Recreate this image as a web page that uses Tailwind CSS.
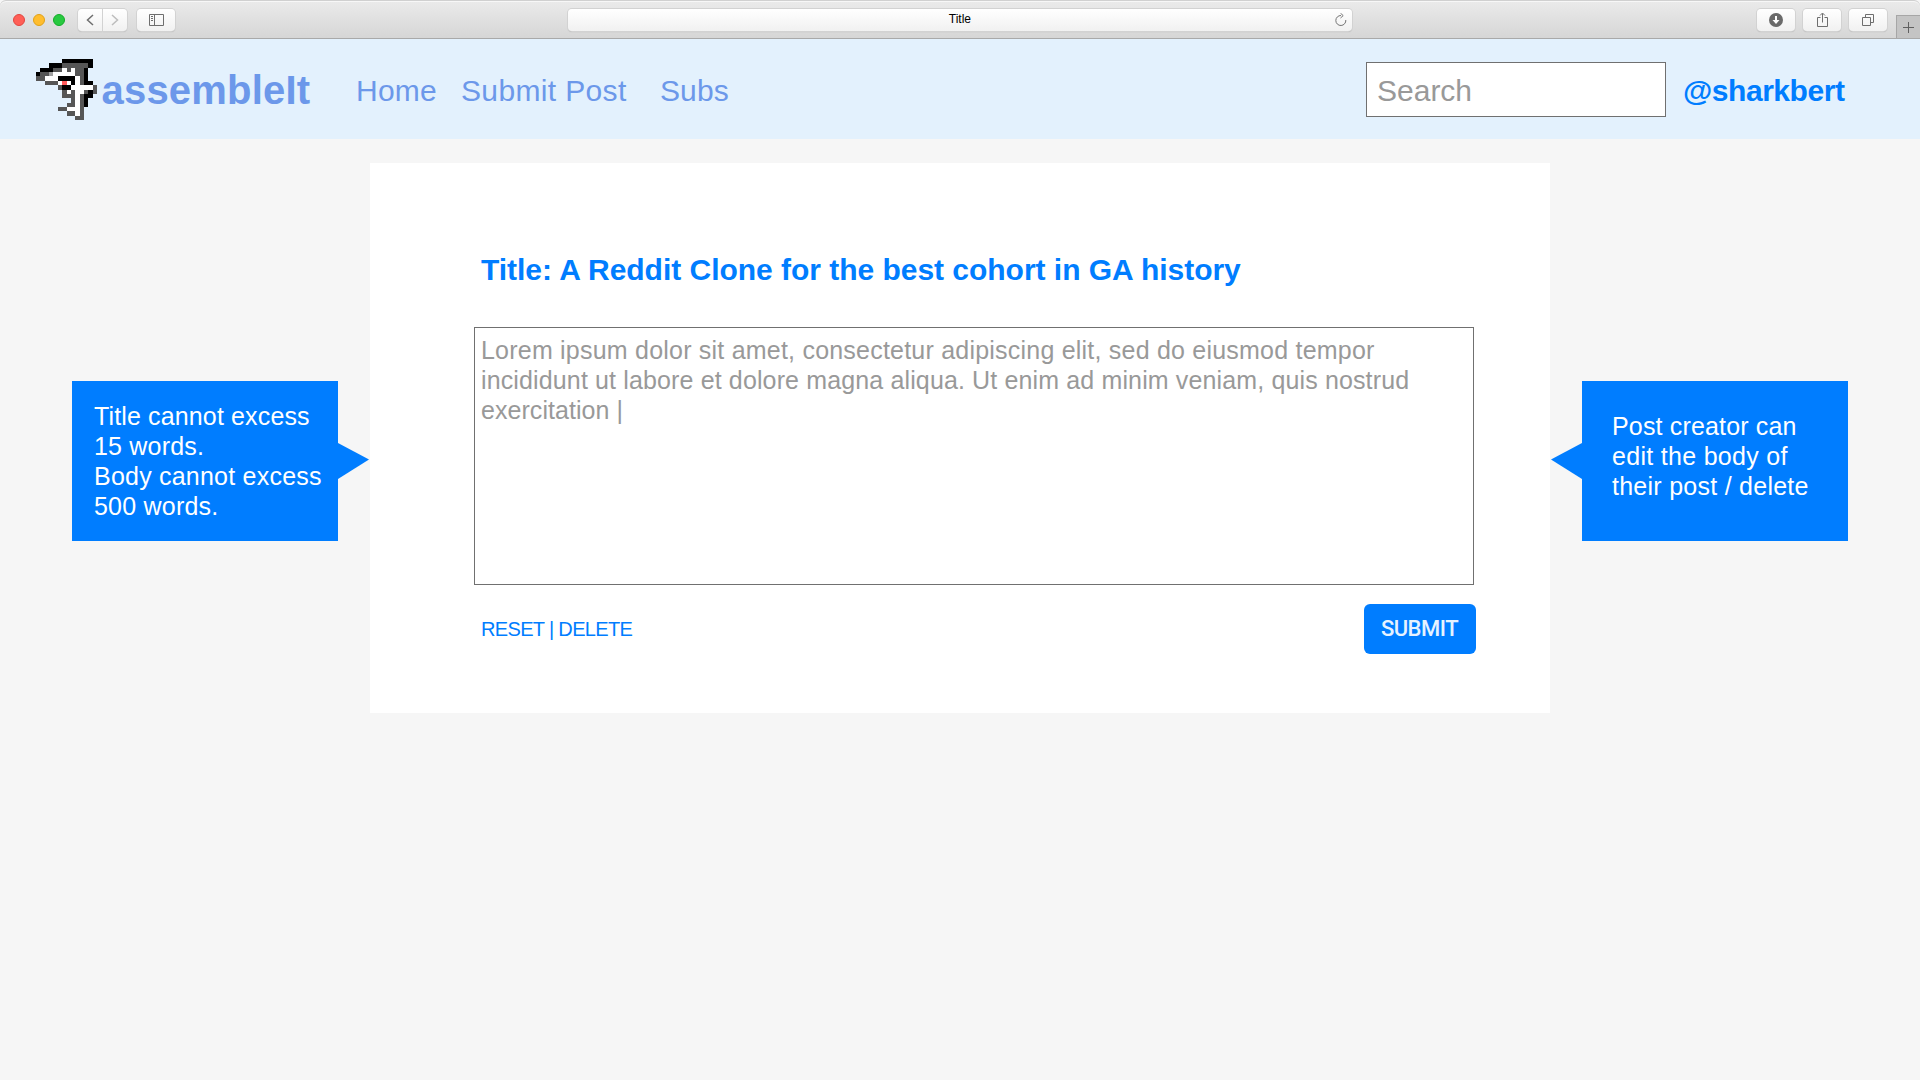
<!DOCTYPE html>
<html lang="en">
<head>
<meta charset="utf-8">
<title>Title</title>
<script src="https://cdn.jsdelivr.net/npm/@tailwindcss/browser@4"></script>
</head>
<body class="h-[1080px] w-[1920px] overflow-hidden bg-[#f6f6f6] font-['Liberation_Sans',Arial,sans-serif] whitespace-nowrap">
<div class="flex h-[39px] items-start rounded-t-md border-b border-[#a9a9a9] bg-linear-to-b from-[#ebebeb] to-[#d6d6d6] shadow-[inset_0_1px_0_#d0d0d0,inset_0_2px_0_#f7f7f7] pt-[9px]">
  <div class="flex w-[78px] gap-2 pl-[13px] pt-[5px]">
    <i class="size-3 rounded-full border border-[#e2463f] bg-[#ff5f57]"></i>
    <i class="size-3 rounded-full border border-[#e1a116] bg-[#ffbd2e]"></i>
    <i class="size-3 rounded-full border border-[#12ac28] bg-[#28c940]"></i>
  </div>
  <div class="flex gap-px">
    <div class="flex h-[22px] w-6 items-center justify-center rounded-l bg-linear-to-b from-white to-[#f1f1f1] shadow-[0_0_0_1px_#d2d2d2,0_1px_1px_#aaa]"><svg class="h-3 w-2" viewBox="0 0 8 12" fill="none" stroke="#6e6e6e" stroke-width="1.5"><path d="M7 1 1.500 6 7 11"/></svg></div>
    <div class="flex h-[22px] w-6 items-center justify-center rounded-r bg-linear-to-b from-white to-[#f1f1f1] shadow-[0_0_0_1px_#d2d2d2,0_1px_1px_#aaa]"><svg class="h-3 w-2" viewBox="0 0 8 12" fill="none" stroke="#bdbdbd" stroke-width="1.5"><path d="M1 1 6.500 6 1 11"/></svg></div>
  </div>
  <div class="ml-[10px] flex h-[22px] w-[38px] items-center justify-center rounded bg-linear-to-b from-white to-[#f1f1f1] shadow-[0_0_0_1px_#d2d2d2,0_1px_1px_#aaa]"><svg class="ml-px h-3 w-[15px]" viewBox="0 0 15 12" fill="none" stroke="#6e6e6e"><path d="M.5.5h14v11H.5zM5.500.5v11M2 2.500h2M2 4.500h2M2 6.500h2"/></svg></div>
  <div class="ml-[393px] flex h-[22px] w-[785px] items-center rounded bg-linear-to-b from-white to-[#f1f1f1] pl-[381px] shadow-[0_0_0_1px_#d2d2d2,0_1px_1px_#aaa]"><span class="w-[386px] pb-0.5 text-xs text-black">Title</span><svg class="h-[14px] w-3" viewBox="0 0 12 14" fill="none" stroke="#737373"><path d="M6 2.500A5 5 0 1 0 10.800 7M5.500.2 8.200 2.600 5.500 5"/></svg></div>
  <div class="ml-[405px] flex gap-2">
    <div class="flex h-[22px] w-[38px] items-center justify-center rounded bg-linear-to-b from-white to-[#f1f1f1] shadow-[0_0_0_1px_#d2d2d2,0_1px_1px_#aaa]"><svg class="size-[14px]" viewBox="0 0 14 14"><circle cx="7" cy="7" r="7" fill="#6a6a6a"/><path d="M6 3h2v4h2.500L7 11 3.500 7H6z" fill="#fff"/></svg></div>
    <div class="flex h-[22px] w-[38px] items-center justify-center rounded bg-linear-to-b from-white to-[#f1f1f1] shadow-[0_0_0_1px_#d2d2d2,0_1px_1px_#aaa]"><svg class="ml-px h-4 w-[11px]" viewBox="0 0 11 16" fill="none" stroke="#6e6e6e"><path d="M3.500 5.500h-3v9h10v-9h-3M5.500 10.500V1.500M3 3.500 5.500 1 8 3.500"/></svg></div>
    <div class="flex h-[22px] w-[38px] items-center justify-center rounded bg-linear-to-b from-white to-[#f1f1f1] shadow-[0_0_0_1px_#d2d2d2,0_1px_1px_#aaa]"><svg class="h-3 w-3" viewBox="0 0 12 12" fill="none" stroke="#6e6e6e"><path d="M.5 3.500h8v8h-8zM3.500 3V.5h8v8H9"/></svg></div>
  </div>
  <div class="mt-1.5 ml-[9px] flex h-[23px] w-6 items-center justify-center border-t border-l border-[#a6a6a6] bg-[#c4c4c4]"><svg class="size-[11px]" viewBox="0 0 11 11" stroke="#606060"><path d="M0 5.500h11M5.500 0v11"/></svg></div>
</div>
<header class="flex h-[100px] bg-[#e3f1fd] text-[30px] leading-[34px] text-[#6c98ea]">
  <svg id="shark" class="mt-5 ml-9 h-[61px] w-[61px]" viewBox="0 0 14 14" preserveAspectRatio="none" shape-rendering="crispEdges"></svg>
  <div class="mt-[28px] ml-[4.5px] w-[254.500px] text-[40px] leading-[46px] font-bold tracking-[0.2px]">assembleIt</div>
  <nav class="mt-[35px] flex">
    <a class="w-[105px] tracking-[0.25px]">Home</a><a class="w-[199px] tracking-[0.35px]">Submit Post</a><a class="w-[706px] tracking-[0.1px]">Subs</a>
  </nav>
  <div class="mt-[23px] h-[55px] w-[300px] border border-[#707070] bg-white pt-[11px] pl-[10px] text-[#999]">Search</div>
  <div class="mt-[35px] ml-[17px] font-bold tracking-[-0.45px] text-[#007dff]">@sharkbert</div>
</header>
<main class="flex pt-6 text-[25px] leading-[30px]">
  <aside class="mt-[218px] ml-[72px] flex h-[160px] w-[298px] items-start text-white">
    <div class="h-[159.500px] w-[266px] bg-[#007dff] pt-5 pl-[22px]"><p class="tracking-[0.14px]">Title cannot excess</p><p class="tracking-[0.2px]">15 words.</p><p class="tracking-[0.22px]">Body cannot excess</p><p class="tracking-[0.22px]">500 words.</p></div>
    <svg class="mt-[62px] h-[36px] w-[31px]" viewBox="0 0 31 36"><path d="M0 0 31 16.500 0 36z" fill="#007dff"/></svg>
  </aside>
  <section class="h-[550px] w-[1180px] bg-white pt-[90px] pl-[104px]">
    <h1 class="pl-[7px] text-[30px] leading-[34px] font-bold tracking-[-0.025px] text-[#007dff]">Title: A Reddit Clone for the best cohort in GA history</h1>
    <div class="mt-[40px] h-[258px] w-[1000px] border border-[#707070] pt-[7px] pl-[6px] text-[#999]"><p class="tracking-[0.215px]">Lorem ipsum dolor sit amet, consectetur adipiscing elit, sed do eiusmod tempor</p><p class="tracking-[0.135px]">incididunt ut labore et dolore magna aliqua. Ut enim ad minim veniam, quis nostrud</p><p class="tracking-[0.05px]">exercitation |</p></div>
    <div class="mt-[18.500px] flex w-[1001.500px] items-center justify-between pl-[7px]">
      <div class="text-[20px] tracking-[-0.66px] text-[#007dff]">RESET | DELETE</div>
      <button class="h-[50px] w-[112px] rounded-md bg-[#007dff] pt-px font-['Roboto',sans-serif] text-[22px] font-medium tracking-[-0.5px] text-[#e6f2ff]">SUBMIT</button>
    </div>
  </section>
  <aside class="mt-[218px] flex h-[160px] items-start pl-[1px] text-white">
    <svg class="mt-[62px] h-[36px] w-[31px]" viewBox="0 0 31 36"><path d="M31 0 0 16.500 31 36z" fill="#007dff"/></svg>
    <div class="h-[159.500px] w-[266px] bg-[#007dff] pt-[30px] pl-[30px]"><p class="tracking-[0.16px]">Post creator can</p><p class="tracking-[0.3px]">edit the body of</p><p class="tracking-[0.26px]">their post / delete</p></div>
  </aside>
</main>
<script>
// Logo sprite, one character per pixel
const sprite = [
  "......KKKKKKK.",
  "...KKKGGGGGGK.",
  ".KKKGGWGWGGK..",
  "KGGLWWWWWGGK..",
  "GGWWWKKKKWGK..",
  "..GGGWRWKWGKK.",
  ".....GKKWWWWWG",
  "......GWGWWGKG",
  "......GGGWGKK.",
  "........GWGK..",
  ".......GGWGK..",
  ".....GGWWWG...",
  ".......GGWG...",
  ".........GG..."
];
const colors = {K:"#000", G:"#565656", L:"#a0a0a0", W:"#fff", R:"#ff5a5a"};
document.getElementById("shark").innerHTML = sprite.map((row, y) => [...row].map((c, x) => colors[c] ? `<rect x="${x}" y="${y}" width="1" height="1" fill="${colors[c]}"/>` : "").join("")).join("");
</script>
</body>
</html>
